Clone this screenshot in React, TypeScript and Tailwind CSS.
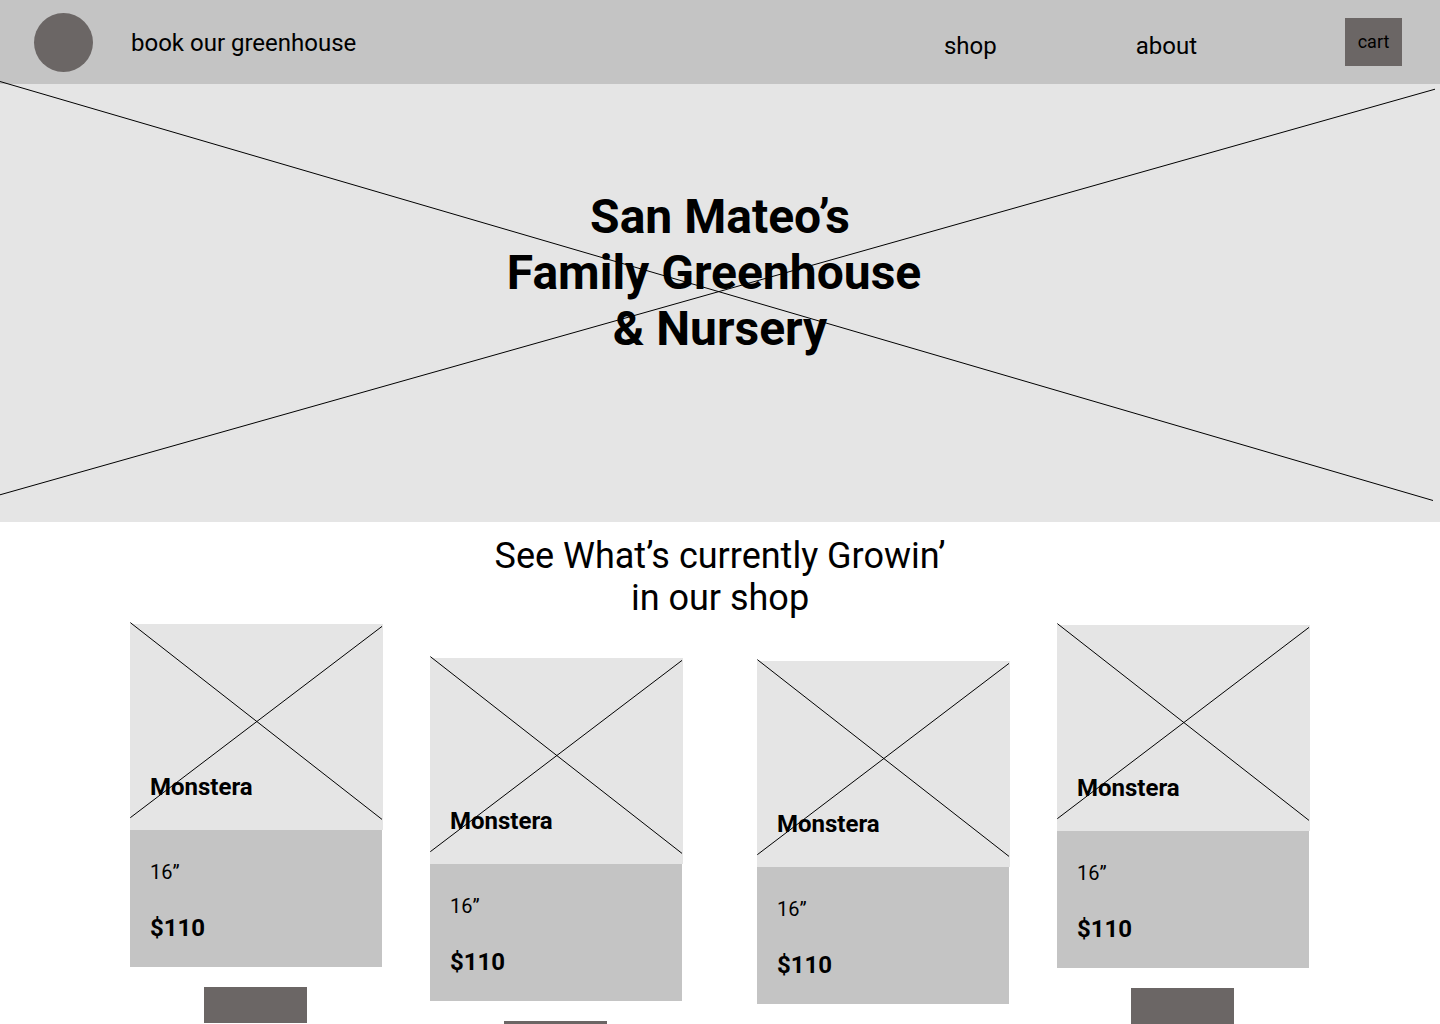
type Plant = { name: string; size: string; price: string; offset: string };

const leftShelf: Plant[] = [
  { name: 'Monstera', size: '16”', price: '$110', offset: 'mt-0' },
  { name: 'Monstera', size: '16”', price: '$110', offset: 'mt-[34px]' },
];

const rightShelf: Plant[] = [
  { name: 'Monstera', size: '16”', price: '$110', offset: 'mt-[37px]' },
  { name: 'Monstera', size: '16”', price: '$110', offset: 'mt-px' },
];

function PlantCard({ plant }: { plant: Plant }) {
  return (
    <article className={`flex w-[252px] flex-col ${plant.offset}`}>
      <div className="relative flex h-[206px] w-full items-end bg-[#e5e5e5] px-5 pb-[29px]">
        <svg
          className="absolute inset-0 size-full overflow-visible"
          viewBox="0 0 252 206"
          fill="none"
          stroke="black"
          aria-hidden="true"
        >
          <path d="M252.5 0 V206" stroke="#e5e5e5" />
          <path d="M0.3 -1.4 L252 195.4 M252 2.4 L0.3 193.7" />
        </svg>
        <h3 className="relative text-2xl leading-7 font-bold">{plant.name}</h3>
      </div>
      <div className="flex w-full flex-col gap-[30px] bg-[#c4c4c4] px-5 pt-[30px] pb-[25px]">
        <p className="text-xl leading-6">{plant.size}</p>
        <p className="text-2xl leading-7 font-bold">{plant.price}</p>
      </div>
      <button
        type="button"
        aria-label={`Add ${plant.name} to cart`}
        className="mt-5 ml-[74px] h-9 w-[103px] bg-[#6b6665]"
      />
    </article>
  );
}

export default function App() {
  return (
    <div className="min-h-screen bg-white font-['Roboto',sans-serif] text-black">
      <header className="flex h-[84px] items-center justify-between bg-[#c4c4c4] pr-[38px] pl-[34px]">
        <div className="flex items-center gap-[38px]">
          <a href="#home" aria-label="Home" className="size-[59px] rounded-full bg-[#6b6665]" />
          <a href="#book" className="pt-0.5 text-2xl leading-7">
            book our greenhouse
          </a>
        </div>
        <div className="flex items-center gap-[148px]">
          <nav className="flex gap-[139px] pt-2 text-2xl leading-7">
            <a href="#shop">shop</a>
            <a href="#about">about</a>
          </nav>
          <button type="button" className="h-12 w-[57px] bg-[#6b6665] text-lg">
            cart
          </button>
        </div>
      </header>

      <main>
        <section className="relative h-[438px] bg-[#e5e5e5] pt-[105px]">
          <svg
            className="absolute inset-0 size-full overflow-visible"
            viewBox="0 0 1440 438"
            preserveAspectRatio="none"
            fill="none"
            stroke="black"
            aria-hidden="true"
          >
            <path
              d="M0 -2.5 L1433 416.5 M1435 5.2 L0 410.8"
              vectorEffect="non-scaling-stroke"
            />
          </svg>
          <h1 className="relative text-center text-5xl leading-14 font-bold whitespace-pre">
            {'San Mateo’s\nFamily Greenhouse \n& Nursery'}
          </h1>
        </section>

        <section id="shop" className="pt-[13px]">
          <h2 className="text-center text-4xl leading-[42px]">
            See What’s currently Growin’
            <br />
            in our shop
          </h2>
          <div className="mt-[5px] flex justify-between pr-[131px] pl-[130px]">
            <div className="flex items-start gap-12">
              {leftShelf.map((plant, i) => (
                <PlantCard key={i} plant={plant} />
              ))}
            </div>
            <div className="flex items-start gap-12">
              {rightShelf.map((plant, i) => (
                <PlantCard key={i} plant={plant} />
              ))}
            </div>
          </div>
        </section>
      </main>
    </div>
  );
}
